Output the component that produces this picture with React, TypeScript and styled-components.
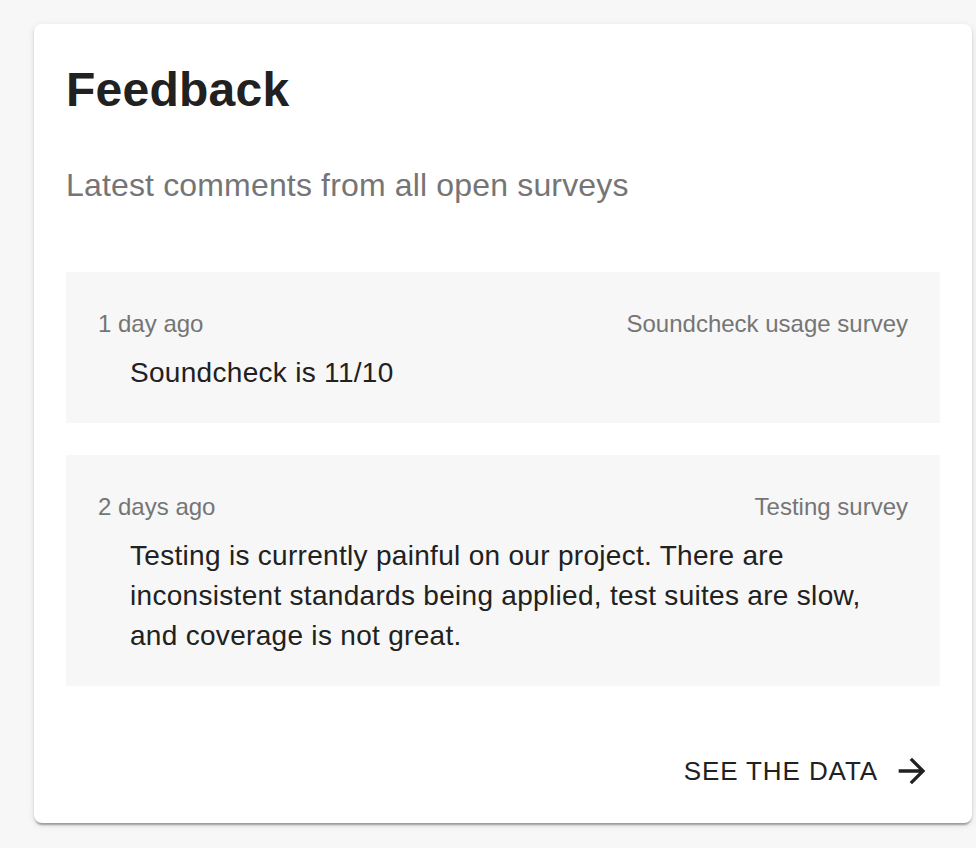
import React from "react"
import styled, { createGlobalStyle } from "styled-components"

const GlobalStyle = createGlobalStyle`
    html, body {
        margin: 0;
        padding: 0;
        background-color: #f7f7f7;
        font-family: "Liberation Sans", Arial, Helvetica, sans-serif;
    }
`

const Page = styled.main`
    box-sizing: border-box;
    width: 976px;
    min-height: 848px;
    padding: 24px 4px 0 34px;
`

const Card = styled.section`
    box-sizing: border-box;
    height: 799px;
    background-color: #ffffff;
    border-radius: 8px;
    box-shadow: 0 4px 2px -2px rgba(0, 0, 0, 0.2), 0 2px 2px 0 rgba(0, 0, 0, 0.14), 0 2px 6px 0 rgba(0, 0, 0, 0.12);
    display: flex;
    flex-direction: column;
`

const Content = styled.div`
    padding: 32px 32px 0;
`

const Title = styled.h2`
    margin: 0;
    font-size: 48px;
    line-height: 68px;
    font-weight: 700;
    letter-spacing: 0.25px;
    color: #212121;
`

const Subtitle = styled.p`
    margin: 37px 0 0;
    font-size: 32px;
    line-height: 48px;
    letter-spacing: 0.16px;
    color: #757575;
`

const CommentList = styled.ul`
    list-style: none;
    margin: 63px 0 0;
    padding: 0;
    display: flex;
    flex-direction: column;
    gap: 32px;
`

const Comment = styled.li`
    background-color: #f7f7f7;
    padding: 36px 32px 30px;
`

const Meta = styled.div`
    display: flex;
    justify-content: space-between;
    font-size: 24px;
    line-height: 32px;
    color: #757575;
`

const Body = styled.p`
    margin: 13px 0 0;
    padding-left: 32px;
    font-size: 28px;
    line-height: 40px;
    letter-spacing: 0.3px;
    color: #212121;
`

const Actions = styled.div`
    margin-top: auto;
    display: flex;
    justify-content: flex-end;
    padding: 0 32px 22px;
`

const LinkButton = styled.button`
    display: inline-flex;
    align-items: center;
    height: 60px;
    padding: 0 8px 0 16px;
    border: none;
    background: none;
    cursor: pointer;
    font-family: inherit;
    font-size: 26px;
    font-weight: 500;
    letter-spacing: 0.9px;
    text-transform: uppercase;
    color: #212121;
`

const EndIcon = styled.span`
    display: inline-flex;
    margin-left: 14px;
    width: 40px;
    height: 40px;
`

const comments = [
    { when: "1 day ago", survey: "Soundcheck usage survey", text: "Soundcheck is 11/10" },
    {
        when: "2 days ago",
        survey: "Testing survey",
        text: "Testing is currently painful on our project. There are inconsistent standards being applied, test suites are slow, and coverage is not great.",
    },
]

const ArrowForward = () => (
    <svg viewBox="0 0 24 24" width="40" height="40" fill="currentColor">
        <path d="M12 4l-1.41 1.41L16.17 11H4v2h12.17l-5.58 5.59L12 20l8-8z" />
    </svg>
)

export default function App() {
    return (
        <>
            <GlobalStyle />
            <Page>
                <Card>
                    <Content>
                        <Title>Feedback</Title>
                        <Subtitle>Latest comments from all open surveys</Subtitle>
                        <CommentList>
                            {comments.map((c) => (
                                <Comment key={c.when}>
                                    <Meta>
                                        <span>{c.when}</span>
                                        <span>{c.survey}</span>
                                    </Meta>
                                    <Body>{c.text}</Body>
                                </Comment>
                            ))}
                        </CommentList>
                    </Content>
                    <Actions>
                        <LinkButton>
                            See the data
                            <EndIcon>
                                <ArrowForward />
                            </EndIcon>
                        </LinkButton>
                    </Actions>
                </Card>
            </Page>
        </>
    )
}
